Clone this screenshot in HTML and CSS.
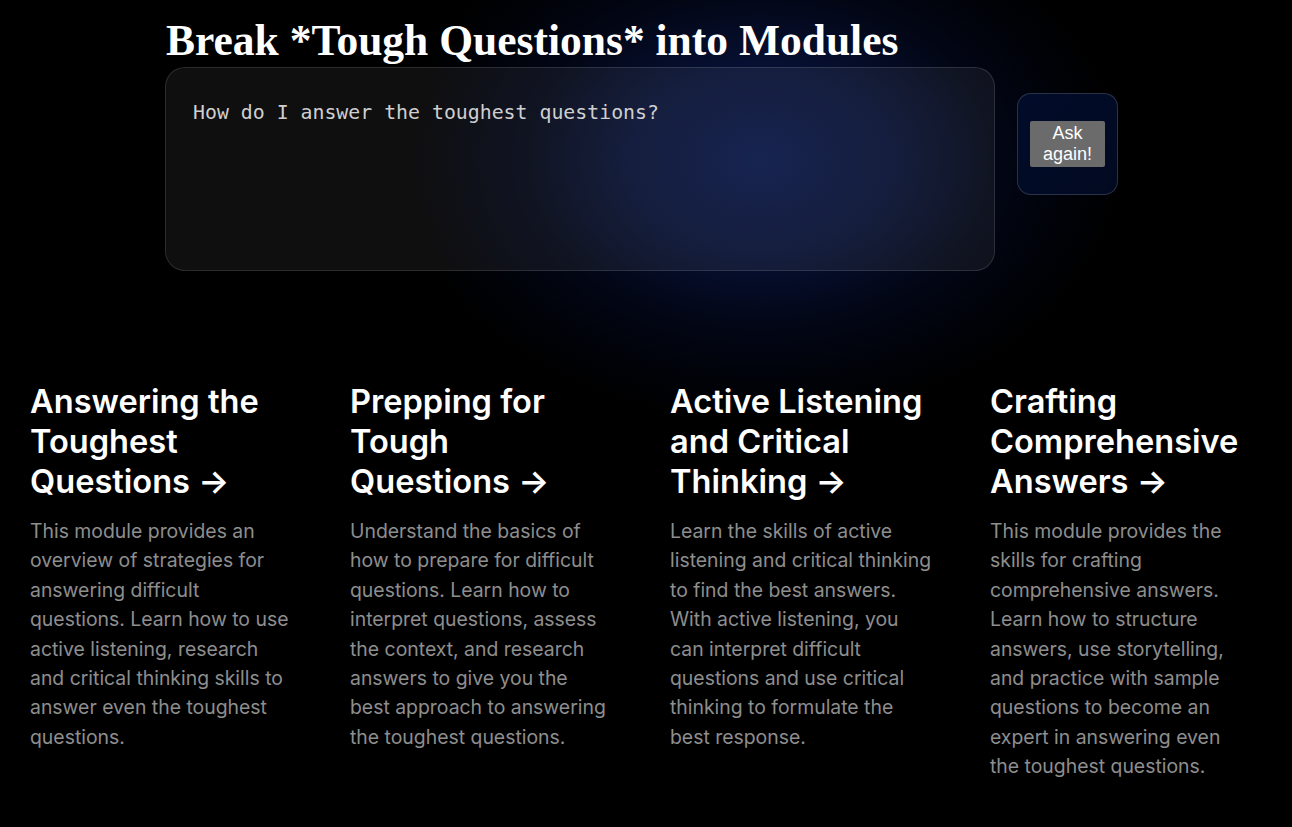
FILE: index.html
```html
<!DOCTYPE html>
<html lang="en">
<head>
<meta charset="utf-8">
<title>Break Tough Questions into Modules</title>
<link rel="stylesheet" href="styles.css">
</head>
<body>
<main class="page">
  <section class="hero">
    <h1 class="title">Break *Tough Questions* into Modules</h1>
    <div class="ask-row">
      <textarea class="question" spellcheck="false">How do I answer the toughest questions?</textarea>
      <div class="ask-box">
        <button class="ask-btn" type="button">Ask again!</button>
      </div>
    </div>
  </section>
  <section class="grid">
    <a class="card" href="#">
      <h2 class="card-title">Answering the Toughest Questions -&gt;</h2>
      <p class="card-text">This module provides an overview of strategies for answering difficult questions. Learn how to use active listening, research and critical thinking skills to answer even the toughest questions.</p>
    </a>
    <a class="card" href="#">
      <h2 class="card-title">Prepping for Tough Questions -&gt;</h2>
      <p class="card-text">Understand the basics of how to prepare for difficult questions. Learn how to interpret questions, assess the context, and research answers to give you the best approach to answering the toughest questions.</p>
    </a>
    <a class="card" href="#">
      <h2 class="card-title">Active Listening and Critical Thinking -&gt;</h2>
      <p class="card-text">Learn the skills of active listening and critical thinking to find the best answers. With active listening, you can interpret difficult questions and use critical thinking to formulate the best response.</p>
    </a>
    <a class="card" href="#">
      <h2 class="card-title">Crafting Comprehensive Answers -&gt;</h2>
      <p class="card-text">This module provides the skills for crafting comprehensive answers. Learn how to structure answers, use storytelling, and practice with sample questions to become an expert in answering even the toughest questions.</p>
    </a>
  </section>
</main>
</body>
</html>
```

FILE: styles.css
```css
* { box-sizing: border-box; }

html, body {
  margin: 0;
  padding: 0;
  height: 100%;
}

body {
  background-color: #000;
  background-image: radial-gradient(ellipse 360px 260px at 760px 160px,
      rgba(9, 23, 70, 1) 0%,
      rgba(8, 19, 60, 0.85) 35%,
      rgba(4, 11, 38, 0.55) 65%,
      rgba(0, 0, 0, 0) 100%);
  background-repeat: no-repeat;
  color: #fff;
  overflow: hidden;
}

.page {
  display: flex;
  flex-direction: column;
}

.hero {
  padding-left: 165px;
  display: flex;
  flex-direction: column;
}

.title {
  margin: 14px 0 0 1px;
  font-family: "Liberation Serif", "Times New Roman", serif;
  font-weight: bold;
  font-size: 43.5px;
  line-height: 53px;
  color: #fff;
}

.ask-row {
  display: flex;
  align-items: flex-start;
  gap: 22px;
}

.question {
  width: 830px;
  height: 204px;
  margin: 0;
  padding: 33px 27px 30px;
  border: 1px solid rgba(255, 255, 255, 0.12);
  border-radius: 20px;
  background: rgba(255, 255, 255, 0.06);
  color: #cfcfcf;
  font-family: "DejaVu Sans Mono", "Liberation Mono", monospace;
  font-size: 19.85px;
  line-height: 24px;
  resize: none;
  outline: none;
}

.ask-box {
  margin-top: 26px;
  width: 101px;
  height: 102px;
  border: 1px solid rgba(255, 255, 255, 0.16);
  border-radius: 14px;
  background: linear-gradient(135deg, #010c2a, #020a20);
  display: flex;
  align-items: center;
  justify-content: center;
}

.ask-btn {
  width: 75px;
  height: 46px;
  padding: 0 4px;
  border: none;
  border-radius: 2px;
  background: #6b6b6b;
  color: #fff;
  font-family: "Liberation Sans", Arial, sans-serif;
  font-size: 18px;
  line-height: 21px;
  cursor: pointer;
}

.grid {
  margin-top: 110px;
  display: grid;
  grid-template-columns: repeat(4, 320px);
}

.card {
  padding: 0 28px 0 30px;
  text-decoration: none;
  color: inherit;
}

.card-title {
  margin: 0 0 16px;
  font-family: "Inter", "Noto Sans", sans-serif;
  font-weight: 600;
  font-size: 32.6px;
  line-height: 40px;
  color: #fff;
}

.card-text {
  margin: 0;
  font-family: "Inter", "Noto Sans", sans-serif;
  font-size: 19.4px;
  line-height: 29.4px;
  color: rgba(255, 255, 255, 0.56);
}
```
